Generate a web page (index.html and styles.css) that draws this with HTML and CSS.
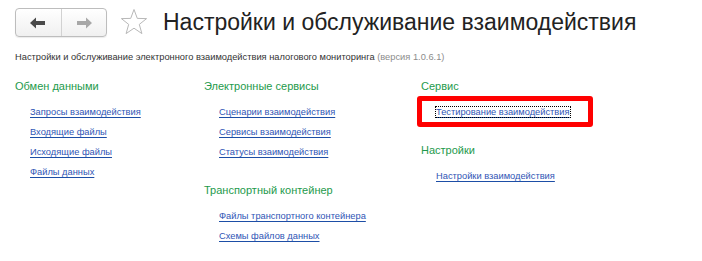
FILE: index.html
```html
<!DOCTYPE html>
<html lang="ru">
<head>
<meta charset="utf-8">
<link rel="stylesheet" href="styles.css">
</head>
<body>
<div class="page">
  <div class="header">
    <div class="navgroup">
      <div class="navbtn">
        <svg width="16" height="12" viewBox="0 0 16 12"><path d="M0 6 L6 0.5 L6 4 L15 4 L15 8 L6 8 L6 11.5 Z" fill="#4a4a4a"/></svg>
      </div>
      <div class="navbtn navbtn-right">
        <svg width="16" height="12" viewBox="0 0 16 12"><path d="M16 6 L10 0.5 L10 4 L1 4 L1 8 L10 8 L10 11.5 Z" fill="#a8a8a8"/></svg>
      </div>
    </div>
    <svg class="star" width="28" height="28" viewBox="0 0 28 28"><path d="M14 1.5 L17.3 10.4 L26.6 10.6 L19.3 16.4 L21.9 25.6 L14 20.2 L6.1 25.6 L8.7 16.4 L1.4 10.6 L10.7 10.4 Z" fill="none" stroke="#b8b8b8" stroke-width="1" stroke-linejoin="miter"/></svg>
    <h1 class="title">Настройки и обслуживание взаимодействия</h1>
  </div>
  <p class="subtitle">Настройки и обслуживание электронного взаимодействия налогового мониторинга <span class="version">(версия 1.0.6.1)</span></p>
  <div class="columns">
    <div class="col col1">
      <div class="group">
        <div class="heading">Обмен данными</div>
        <ul class="links">
          <li><a href="#">Запросы взаимодействия</a></li>
          <li><a href="#">Входящие файлы</a></li>
          <li><a href="#">Исходящие файлы</a></li>
          <li><a href="#">Файлы данных</a></li>
        </ul>
      </div>
    </div>
    <div class="col col2">
      <div class="group">
        <div class="heading">Электронные сервисы</div>
        <ul class="links">
          <li><a href="#">Сценарии взаимодействия</a></li>
          <li><a href="#">Сервисы взаимодействия</a></li>
          <li><a href="#">Статусы взаимодействия</a></li>
        </ul>
      </div>
      <div class="group group-next">
        <div class="heading">Транспортный контейнер</div>
        <ul class="links">
          <li><a href="#">Файлы транспортного контейнера</a></li>
          <li><a href="#">Схемы файлов данных</a></li>
        </ul>
      </div>
    </div>
    <div class="col col3">
      <div class="group">
        <div class="heading">Сервис</div>
        <ul class="links">
          <li class="highlighted"><a href="#" class="focused">Тестирование взаимодействия</a><span class="redbox"></span></li>
        </ul>
      </div>
      <div class="group group-next3">
        <div class="heading">Настройки</div>
        <ul class="links">
          <li><a href="#">Настройки взаимодействия</a></li>
        </ul>
      </div>
    </div>
  </div>
</div>
</body>
</html>
```

FILE: styles.css
```css
html, body {
  margin: 0;
  padding: 0;
  background: #ffffff;
}
body {
  font-family: Arial, "Liberation Sans", sans-serif;
  color: #333;
}
.page {
  width: 702px;
  height: 261px;
  overflow: hidden;
  padding: 8px 0 0 15px;
  box-sizing: border-box;
}
.header {
  display: flex;
  align-items: center;
  height: 29px;
}
.navgroup {
  display: flex;
  width: 92px;
  height: 29px;
  box-sizing: border-box;
  border: 1px solid #bdbdbd;
  border-radius: 4px;
  background: linear-gradient(#ffffff, #f0f0f0);
  box-shadow: 0 1px 1px rgba(0,0,0,0.08);
}
.navbtn {
  flex: 1;
  display: flex;
  align-items: center;
  justify-content: center;
}
.navbtn-right {
  border-left: 1px solid #d2d2d2;
}
.star {
  margin-left: 13px;
  margin-top: -2px;
}
.title {
  margin: 0 0 0 15px;
  font-weight: normal;
  font-size: 23px;
  color: #222;
  line-height: 29px;
  white-space: nowrap;
}
.subtitle {
  margin: 13px 0 0 0;
  font-size: 9.3px;
  line-height: 14px;
  color: #333;
}
.version {
  color: #8c8c8c;
}
.columns {
  display: flex;
  margin-top: 14px;
}
.col1 { width: 189px; }
.col2 { width: 217px; }
.col3 { width: 200px; }
.heading {
  font-size: 11px;
  line-height: 16px;
  height: 16px;
  color: #1e9a4c;
}
.links {
  list-style: none;
  margin: 8px 0 0 0;
  padding: 0 0 0 15px;
}
.links li {
  height: 20px;
  line-height: 20px;
  font-size: 9.3px;
}
.links a {
  color: #2f55b5;
  text-decoration: underline;
  text-decoration-color: #1d4ea6;
  text-underline-offset: 2px;
}
.group-next { margin-top: 20px; }
.group-next3 { margin-top: 20px; }
.highlighted {
  position: relative;
}
.focused {
  outline: 1px dotted #000;
  outline-offset: 0;
}
.redbox {
  position: absolute;
  left: -19px;
  top: -6px;
  width: 176px;
  height: 31px;
  box-sizing: border-box;
  border: 5px solid #ff0000;
  border-radius: 3px;
}
```
